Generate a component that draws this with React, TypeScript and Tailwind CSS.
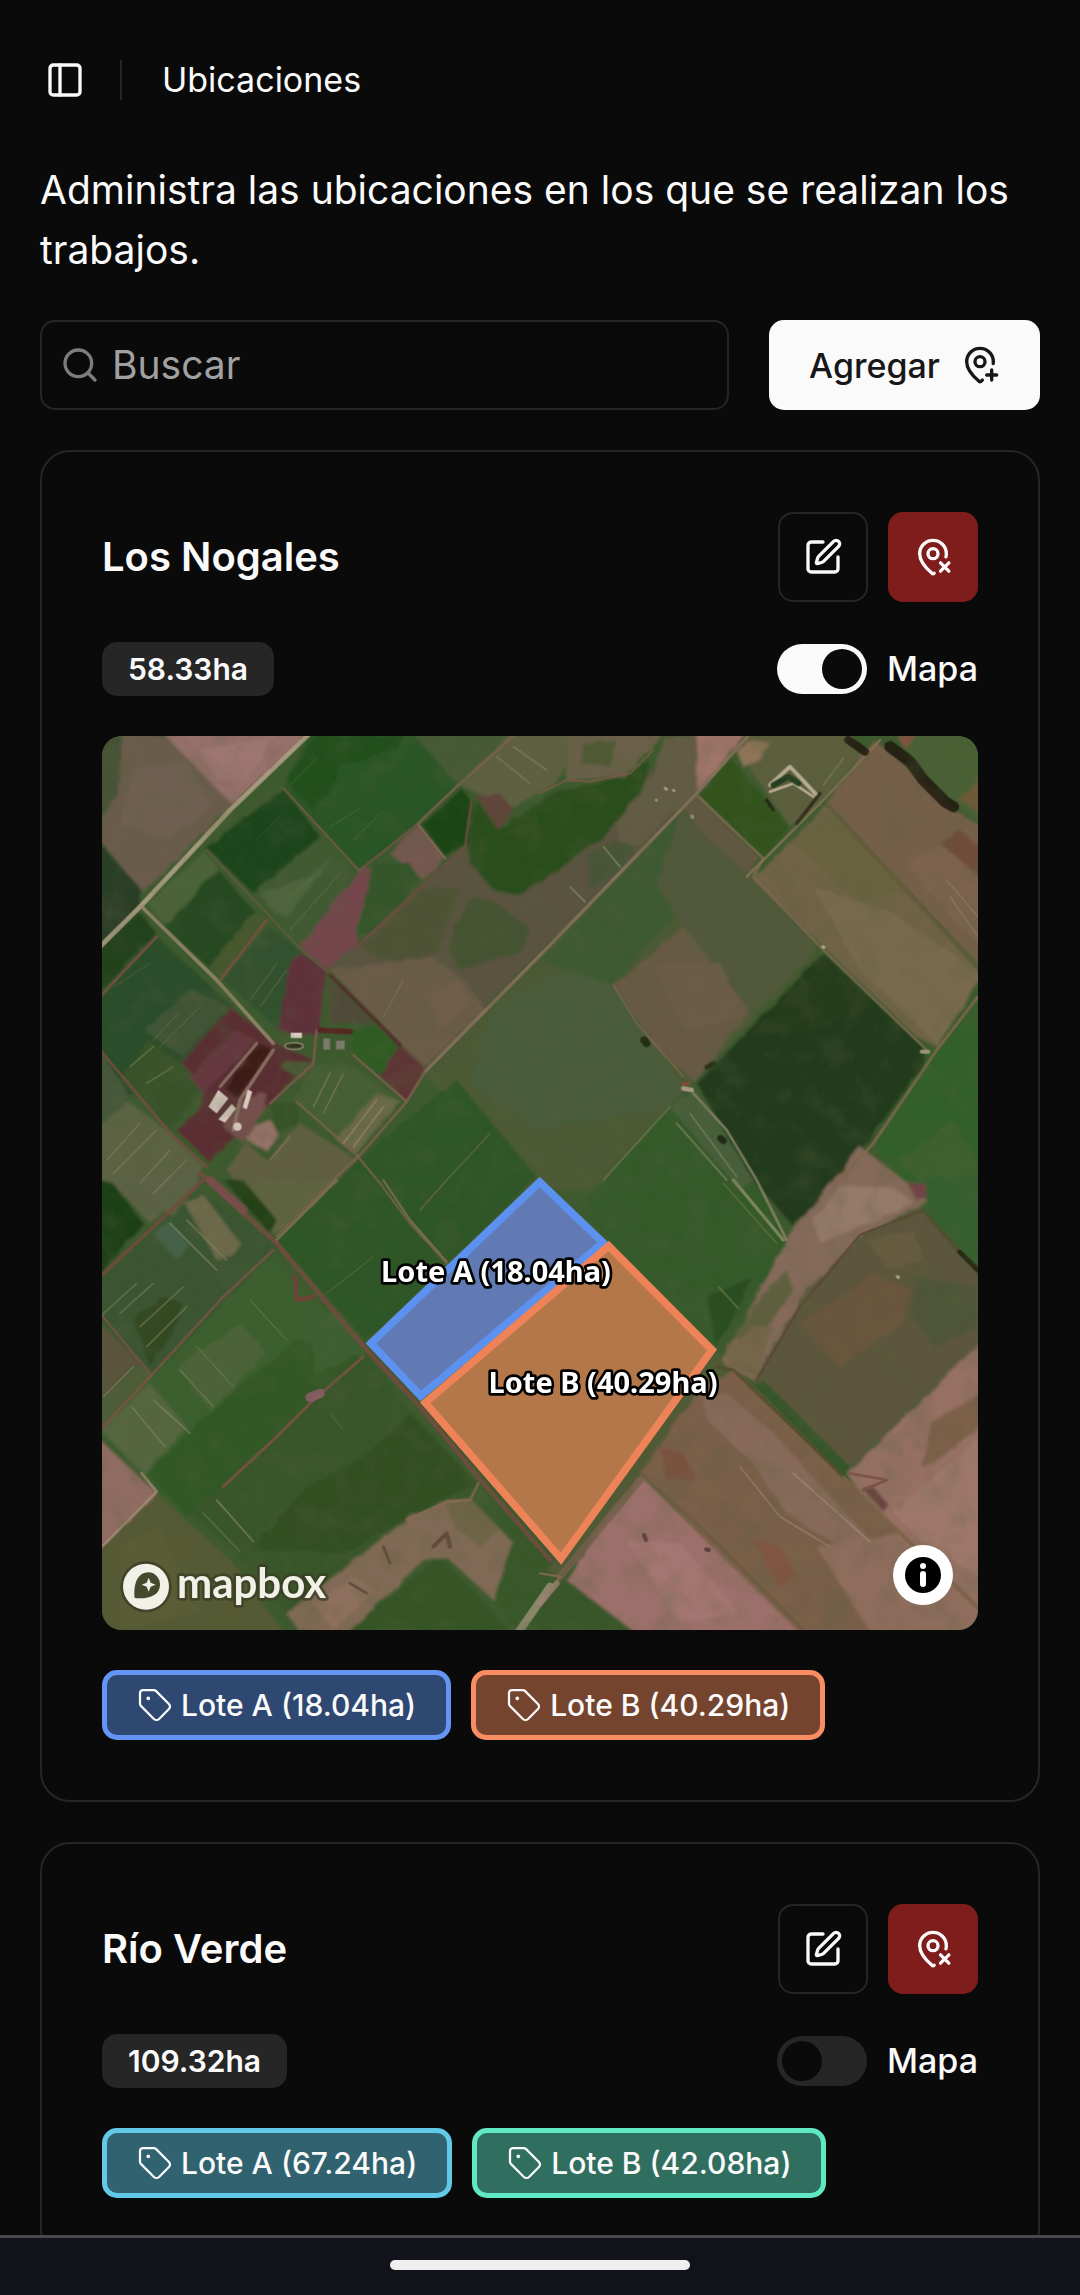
import { useState } from "react";
import { MapPinPlus, MapPinX, PanelLeft, Search, SquarePen, Tag } from "lucide-react";

type Shape = [fill: string, points: string];
type Line = [stroke: string, width: number, points: string];

type Lot = { name: string; area: string; tone: string };
type Place = { name: string; area: string; showMap: boolean; lots: Lot[] };

const places: Place[] = [
  {
    name: "Los Nogales",
    area: "58.33ha",
    showMap: true,
    lots: [
      { name: "Lote A", area: "18.04ha", tone: "border-[#6495f4] bg-[#2e4872]" },
      { name: "Lote B", area: "40.29ha", tone: "border-[#f88d62] bg-[#75442f]" },
    ],
  },
  {
    name: "Río Verde",
    area: "109.32ha",
    showMap: false,
    lots: [
      { name: "Lote A", area: "67.24ha", tone: "border-[#62c9e6] bg-[#306270]" },
      { name: "Lote B", area: "42.08ha", tone: "border-[#60e8c4] bg-[#306f5f]" },
    ],
  },
];

/* Satellite imagery, one list of fields and one of tracks per tile. */
const northWest: Shape[] = [
  ["#4c5a35", "975,1030 1790,190 2150,640 2130,690 1780,1050 1500,1380 1280,1380"],
  ["#495b3a", "1180,830 1540,650 1620,890 1750,1070 1700,1130 1320,1200 1110,1060"],
  ["#6b5c4c", "0,0 200,18 395,222 130,490 0,330"],
  ["#6f6151", "100,120 260,90 330,230 200,330 60,280"],
  ["#455336", "0,18 70,18 60,110 50,200 0,270"],
  ["#96706a", "180,0 640,0 395,222"],
  ["#9d766f", "300,60 520,20 440,150 350,150"],
  ["#2b3c25", "0,340 125,480 110,550 0,650"],
  ["#2b5527", "630,0 930,0 1075,165 950,285 780,420 550,170"],
  ["#21501e", "640,18 920,18 890,60 720,110 690,190 640,240 560,160"],
  ["#1d441b", "550,175 660,320 460,490 320,355"],
  ["#3f5a33", "665,325 770,435 600,650 460,490"],
  ["#4d653c", "480,490 600,450 700,380 560,560 520,545"],
  ["#4b6338", "315,365 350,415 200,585 140,520"],
  ["#274a22", "355,420 465,545 330,715 190,590"],
  ["#46592f", "465,545 505,575 365,750 330,710"],
  ["#30512e", "505,590 600,660 540,900 365,750"],
  ["#24431f", "0,650 120,545 170,610 0,790"],
  ["#2c4e2c", "0,800 170,620 400,830 240,1000 90,1100 0,960"],
  ["#3f5434", "270,780 390,830 250,980 130,900"],
  ["#37522c", "150,930 240,1000 300,1080 215,1200 60,1050"],
  ["#45593a", "0,960 90,1100 0,1180"],
  ["#5c6442", "80,1110 215,1215 310,1310 230,1460 90,1400 0,1400 0,1190"],
  ["#5a2f30", "390,830 530,940 640,990 510,1115 380,1240 330,1300 230,1200 300,1130 310,1080 245,1000"],
  ["#65393f", "410,900 470,930 310,1090 270,1040"],
  ["#3c1b14", "480,940 520,960 410,1105 375,1070"],
  ["#74504c", "420,1110 500,1090 490,1150 430,1240 370,1190"],
  ["#75464d", "790,410 815,420 770,600 770,650 680,720 600,650"],
  ["#5f303a", "600,665 680,720 655,915 590,915 535,900 570,700"],
  ["#4f4a38", "690,745 820,880 690,880"],
  ["#75584f", "870,370 955,285 1035,385 970,450"],
  ["#35542b", "775,610 820,400 930,400 960,450 820,600"],
  ["#5a523f", "690,715 1095,350 1190,490 1320,460 1560,260 1640,130 1790,18 1940,18 1790,190 975,1020"],
  ["#4f5236", "780,650 960,480 1080,470 1010,680 850,690"],
  ["#6a5c46", "690,720 1000,680 1090,750 1160,840 975,1010 900,940"],
  ["#725d4b", "990,800 1070,750 1120,820 1010,900"],
  ["#445232", "1060,590 1120,500 1190,520 1290,600 1270,660 1080,720 1045,660"],
  ["#294e1b", "1130,210 1195,300 1350,190 1520,155 1650,90 1640,160 1550,280 1500,330 1320,460 1250,495 1180,480 1110,400 1105,330"],
  ["#1c4516", "1085,175 1120,220 1100,340 1035,380 965,285"],
  ["#455a35", "930,0 1240,0 1075,165"],
  ["#5f6043", "1240,0 1450,0 1370,160 1230,235 1080,165"],
  ["#60443a", "1130,200 1200,190 1240,240 1195,300"],
  ["#2d5c24", "750,900 830,890 895,950 840,1035 760,970"],
  ["#5f3435", "900,945 975,1015 920,1115 840,1035"],
  ["#455f36", "650,1000 760,1010 905,1115 770,1275 580,1110"],
  ["#6b694a", "830,1090 900,1115 770,1275 710,1230"],
  ["#345226", "510,1120 590,1120 600,1170 530,1210"],
  ["#9a736a", "460,1190 510,1170 540,1220 500,1260 440,1230"],
  ["#615f43", "600,1180 770,1290 530,1520 380,1320 440,1240 500,1290"],
  ["#2d5626", "530,1530 780,1285 1070,1050 1310,1340 800,1835"],
  ["#4b5a36", "560,990 650,1000 620,1060 540,1010"],
];

const northWestLines: Line[] = [
  ["#b5a58b", 14, "640,0 390,240 125,525 0,650"],
  ["#9a8a70", 11, "125,530 350,750 520,940"],
  ["#7a5a48", 6, "550,175 780,425"],
  ["#5f5b40", 8, "320,360 600,655 690,730"],
  ["#7c5046", 8, "500,570 360,750"],
  ["#7c5046", 8, "170,620 0,800"],
  ["#55302a", 12, "690,735 900,945"],
  ["#7d6250", 8, "950,285 1075,165 1240,18"],
  ["#8a6a58", 7, "955,285 1035,385"],
  ["#6f5344", 8, "780,420 950,285"],
  ["#6f4c40", 8, "770,650 1095,350 1115,210"],
  ["#8b7460", 10, "975,1025 1350,645 1790,190 1960,0"],
  ["#7d6250", 8, "975,1025 920,1115 780,1275 700,1350 530,1520"],
  ["#7d4c44", 8, "0,960 220,1220 320,1310"],
  ["#7d6250", 7, "920,1115 760,975"],
  ["#7d6250", 7, "590,1115 770,1275 840,1360 930,1480 1040,1600"],
  ["#7d5a50", 8, "650,900 640,1000 510,1120"],
  ["#8d7767", 9, "470,940 360,1070"],
  ["#8d7767", 11, "520,960 420,1110 400,1200"],
  ["#5a2020", 16, "660,900 750,905"],
  ["#4f6f40", 3, "570,165 650,85"],
  ["#4f6f40", 3, "690,290 780,235"],
  ["#4f6f40", 3, "760,330 840,250"],
  ["#36602d", 3, "470,330 540,260"],
  ["#66744e", 3, "570,600 720,430"],
  ["#66744e", 3, "560,510 640,440"],
  ["#66744e", 3, "450,810 530,700"],
  ["#66744e", 3, "480,830 560,720"],
  ["#66744e", 3, "160,930 235,850"],
  ["#66744e", 3, "180,950 300,830"],
  ["#747a58", 4, "90,1010 160,950"],
  ["#747a58", 4, "140,1060 220,1010"],
  ["#55643f", 3, "40,770 150,700"],
  ["#7f7f5e", 4, "20,1290 120,1180"],
  ["#7f7f5e", 4, "40,1330 170,1200"],
  ["#7f7f5e", 4, "120,1360 210,1260"],
  ["#7f7f5e", 4, "160,1390 260,1290"],
  ["#7f7f5e", 4, "640,1130 690,1030"],
  ["#7f7f5e", 4, "670,1150 730,1030"],
  ["#908665", 5, "730,1240 830,1110"],
  ["#908665", 5, "760,1250 850,1130"],
  ["#857a59", 4, "510,1290 570,1220"],
  ["#7d7354", 4, "850,860 910,750"],
  ["#6d7048", 4, "1040,1350 1170,1210"],
  ["#78866a", 4, "1190,80 1290,160"],
  ["#78866a", 4, "1240,50 1340,120"],
];

const northEast: Shape[] = [
  ["#6a6148", "90,0 370,0 330,60 250,140 80,150"],
  ["#4f5a36", "130,40 230,30 210,110 120,100"],
  ["#a1756a", "470,0 620,0 560,90 470,180"],
  ["#645c44", "370,18 470,18 470,190 240,400 230,280 340,130"],
  ["#4a5538", "140,380 220,330 290,350 230,430 150,480"],
  ["#5c5e3e", "590,60 640,0 930,0 960,80 850,210 750,290"],
  ["#8f7459", "590,60 640,30 690,40 660,90 610,110"],
  ["#30521f", "475,190 575,90 750,290 670,385"],
  ["#60593f", "430,230 470,195 660,385 620,430 540,390"],
  ["#3e5a31", "130,560 420,240 400,400 400,560 220,765 0,690"],
  ["#51593a", "420,250 620,430 820,640 800,700 630,840 430,590 350,460"],
  ["#675a45", "430,590 630,840 465,1055 350,960 220,765"],
  ["#6c5b46", "340,700 540,700 620,860 430,900"],
  ["#765f49", "1000,30 1150,150 1240,240 1330,290 1330,720 860,220"],
  ["#7d634e", "1100,400 1220,330 1330,450 1330,660 1160,480"],
  ["#6f4e3b", "1200,340 1260,300 1330,360 1330,450"],
  ["#486034", "1060,0 1330,0 1330,290 1160,150"],
  ["#805241", "1070,18 1130,18 1100,60"],
  ["#6c5a38", "1314,140 1330,260 1260,210"],
  ["#6f6447", "860,225 1330,735 1190,950 1130,920 640,450"],
  ["#796a4e", "820,470 1040,540 1330,735 1190,940 960,720"],
  ["#6b6440", "760,340 870,240 1100,480 960,520"],
  ["#243a1b", "850,670 1150,950 1155,1000 900,1350 760,1490 640,1350 470,1060"],
  ["#263e1a", "850,680 1010,820 830,900 640,910"],
  ["#335f2c", "1190,960 1330,800 1330,1620 1000,1250 1155,1000"],
  ["#3d602f", "1080,1290 1240,1170 1330,1330 1330,1500 1200,1420"],
  ["#355a2a", "190,1350 390,1130 470,1080 640,1350 745,1540 530,1850 205,1530 110,1420"],
  ["#465f3b", "390,1130 470,1080 640,1350 600,1380"],
  ["#2c4e22", "500,1700 640,1640 560,1800 530,1850"],
];

const northEastLines: Line[] = [
  ["#7b6a50", 8, "470,195 670,385 640,440 850,660 1160,960"],
  ["#867356", 8, "1020,30 850,210 620,440"],
  ["#665b3d", 8, "860,220 1020,400 1330,730"],
  ["#80694f", 9, "1314,800 1190,960 1000,1240 880,1370"],
  ["#7b6a50", 5, "220,765 290,880 430,1040"],
  ["#6c7850", 5, "390,1130 190,1350"],
  ["#8a8468", 8, "460,1090 560,1200 650,1350 740,1530"],
  ["#77805b", 6, "410,1180 560,1350"],
  ["#77805b", 5, "450,1150 590,1340"],
  ["#c7baa2", 12, "690,165 750,110 830,195"],
  ["#c7baa2", 8, "690,185 760,160 820,200"],
  ["#17371a", 17, "700,165 745,140 775,160"],
  ["#1d180f", 34, "1050,50 1110,95 1150,150 1215,215 1240,230"],
  ["#1d180f", 24, "925,30 975,65"],
  ["#282015", 10, "680,210 700,240"],
  ["#2b2718", 10, "840,190 770,280"],
  ["#927e67", 4, "1220,450 1314,560"],
  ["#927e67", 4, "1230,500 1314,620"],
  ["#879373", 4, "190,350 240,410"],
  ["#879373", 4, "90,470 135,515"],
  ["#7a7d52", 5, "910,85 850,165"],
  ["#7f5a48", 6, "0,190 80,150 150,155 270,130 340,60"],
  ["#1c2512", 22, "312,930 320,940"],
  ["#2a2a18", 14, "500,1012 522,1000"],
  ["#182512", 20, "542,1225 550,1232"],
  ["#c0a79a", 14, "430,1075 455,1080"],
  ["#a33f3c", 8, "428,1062 445,1060"],
  ["#b3a48a", 12, "1145,965 1165,965"],
  ["#b9b79d", 9, "848,650 852,652"],
  ["#b9ad9a", 8, "375,175 380,178"],
  ["#b9ad9a", 8, "400,180 402,182"],
  ["#b9ad9a", 8, "348,210 350,211"],
  ["#94a27f", 10, "455,258 458,262"],
];

const southWest: Shape[] = [
  ["#1f3f18", "0,0 40,10 130,130 0,280"],
  ["#5c6244", "30,0 300,-40 290,20 150,130"],
  ["#3b5530", "300,30 530,190 510,220 160,580 0,410 0,300"],
  ["#456248", "160,160 210,120 270,200 230,240"],
  ["#6d6a4b", "255,70 310,45 420,190 400,230 350,240"],
  ["#304a23", "100,420 180,350 250,370 220,460 150,560"],
  ["#5a523e", "0,430 120,545 0,660"],
  ["#4e5d38", "0,660 120,550 160,590 0,750"],
  ["#5e6441", "430,0 720,0 530,170"],
  ["#213f18", "370,0 430,0 530,120 510,160"],
  ["#3b5f2d", "510,230 800,510 370,920 250,1010 130,880 0,760 160,590"],
  ["#556640", "0,750 150,610 260,740 200,810 130,880"],
  ["#4b6439", "230,560 420,430 500,520 330,690"],
  ["#305826", "600,480 400,630 140,880 260,1010 560,740 790,530"],
  ["#375729", "800,520 930,690 1130,910 1110,950 940,1010 560,1300 400,1110 270,1000"],
  ["#304f24", "790,830 930,700 1130,910 940,1000 740,1120 450,1110 620,920"],
  ["#3d5f31", "620,380 720,400 790,500 650,590"],
  ["#8f6c62", "0,780 170,940 0,1110"],
  ["#545a35", "170,940 400,1150 560,1370 0,1370 0,1110"],
  ["#5a5b36", "60,1100 180,1040 300,1300 60,1350"],
  ["#395829", "1140,910 1400,1180 1400,1370 1240,1340 1180,1260 1240,1090"],
  ["#345426", "720,1370 1020,1130 1250,1370"],
  ["#806a55", "560,1300 930,1010 1040,965 1110,955 1240,1090 1180,1260 1040,1130 970,1140 730,1370 610,1370"],
  ["#6e6547", "1040,970 1110,955 1200,1050 1140,1100 1060,1040"],
  ["#8d6f5d", "640,1270 760,1190 830,1230 700,1350"],
];

const southWestLines: Line[] = [
  ["#774b41", 14, "300,-20 530,190 800,510 960,680 1150,910 1350,1140"],
  ["#7d4e4d", 26, "330,0 430,90"],
  ["#754a3d", 10, "310,0 0,290"],
  ["#7d5543", 8, "520,210 370,350 150,590 0,750"],
  ["#7a5245", 7, "0,400 150,580"],
  ["#7d5443", 9, "790,530 640,660 530,770 370,920"],
  ["#915e6c", 28, "630,652 660,640"],
  ["#78403a", 14, "585,290 590,360 640,350"],
  ["#8a755c", 6, "850,0 930,120 1040,245"],
  ["#8a7559", 6, "530,180 710,0"],
  ["#6e6a48", 4, "1040,0 960,90"],
  ["#52663a", 4, "820,230 680,340"],
  ["#7c7f5a", 5, "210,130 350,270"],
  ["#7c7f5a", 5, "260,120 380,240"],
  ["#747a55", 4, "0,410 110,310"],
  ["#747a55", 4, "60,400 160,310"],
  ["#747a55", 4, "140,500 260,380"],
  ["#747a55", 4, "120,440 250,320"],
  ["#7c7f5a", 4, "10,650 100,560"],
  ["#7e8860", 4, "95,680 195,800"],
  ["#7e8860", 4, "160,660 270,760"],
  ["#758059", 4, "240,570 340,680"],
  ["#6d7a50", 4, "290,500 400,620"],
  ["#5d7548", 4, "450,360 560,480"],
  ["#8d8a65", 4, "350,960 460,1085"],
  ["#657650", 4, "310,1000 420,1115"],
  ["#5e7146", 3, "690,700 730,750"],
  ["#876b58", 8, "1135,910 1110,960 1040,965 920,1020"],
  ["#a28a77", 8, "125,880 170,935 0,1105"],
  ["#62433a", 12, "1000,1100 1040,1060 1050,1100"],
  ["#62433a", 8, "850,1100 870,1150"],
  ["#62433a", 8, "750,1210 800,1240"],
  ["#9b9078", 24, "1260,1350 1350,1220"],
];

const southEast: Shape[] = [
  ["#345f2d", "1160,-10 1330,-10 1330,290 1140,80"],
  ["#856b5a", "880,0 960,-100 1090,0 1160,60 1140,80 970,160 800,340 640,600 540,550 760,150"],
  ["#957a68", "900,20 1060,20 1120,70 960,140 840,190 820,120"],
  ["#60603f", "680,330 740,270 760,330 640,500 580,470"],
  ["#756549", "560,500 640,440 700,440 650,590 560,560"],
  ["#5c563c", "1140,85 1330,300 1330,480 920,870 640,600 800,330 970,165"],
  ["#69563e", "780,430 1000,280 1110,330 1090,430 900,560"],
  ["#4f5737", "1130,290 1314,320 1314,440 1180,500 1110,400"],
  ["#665b41", "980,180 1120,150 1150,240 1040,270"],
  ["#956f63", "1330,480 1330,1370 1250,1370 920,880"],
  ["#7c6049", "1330,640 1330,730 1180,850 1140,860 1180,720"],
  ["#9d786a", "1060,1000 1330,760 1330,1200 1140,1080"],
  ["#4f5a36", "530,510 560,560 320,860 60,1190 20,1170"],
  ["#7a5f48", "480,620 580,565 910,890 1330,1290 1330,1370 780,1370 305,880"],
  ["#886a5a", "490,660 560,640 700,760 1000,1090 880,1090 740,1000 640,850 500,720"],
  ["#7a5341", "360,800 430,820 470,900 380,900"],
  ["#805542", "640,1080 720,1100 770,1190 720,1220"],
  ["#8f6d5d", "830,1100 1080,1060 1314,1290 1314,1370 1000,1370"],
  ["#9b706a", "305,890 790,1370 300,1370 80,1200 200,1010"],
  ["#a47671", "260,1080 420,1090 600,1300 420,1330"],
  ["#38572b", "0,1240 80,1200 210,1300 300,1370 0,1370"],
  ["#35552a", "640,610 670,600 930,860 905,890"],
  ["#734347", "1100,5 1160,15 1160,50 1130,60"],
  ["#6a4540", "970,930 1000,920 1045,975 1030,995"],
];

const southEastLines: Line[] = [
  ["#765f4c", 22, "300,900 60,1190"],
  ["#6c5c41", 8, "300,880 480,1040 790,1350"],
  ["#554b2c", 8, "530,560 580,570 910,890"],
  ["#7c6549", 8, "910,890 1080,1060 1330,1300"],
  ["#5b4630", 7, "1330,300 1150,90 960,165 780,380 650,600"],
  ["#21200f", 14, "1258,215 1314,270"],
  ["#68773f", 4, "550,10 710,190"],
  ["#8a8d65", 10, "580,0 730,180"],
  ["#8c6c55", 7, "0,1180 60,1190 0,1280"],
  ["#9b8475", 18, "0,1270 50,1210"],
  ["#957d6c", 5, "600,860 720,1010 870,1100"],
  ["#a08777", 5, "760,880 990,1085"],
  ["#5a3535", 12, "312,1065 318,1080"],
  ["#5a3535", 12, "498,1108 506,1110"],
  ["#7d5045", 8, "930,880 1040,900 970,930"],
  ["#65753f", 5, "535,320 595,385"],
  ["#c5bb9b", 10, "1072,290 1075,292"],
];

const tiles = [
  { id: "nw", move: "translate(0 0)", fields: northWest, tracks: northWestLines },
  { id: "ne", move: "translate(1320 0)", fields: northEast, tracks: northEastLines },
  { id: "sw", move: "translate(0 1350)", fields: southWest, tracks: southWestLines },
  { id: "se", move: "translate(1320 1350)", fields: southEast, tracks: southEastLines },
];

function SatelliteMap() {
  return (
    <div className="relative aspect-[876/894] w-full overflow-hidden rounded-[20px] bg-[#3c5a2e]">
      <svg
        className="block size-full"
        viewBox="6 18 2628 2682"
        preserveAspectRatio="xMidYMid slice"
        role="img"
        aria-label="Mapa satelital de Los Nogales"
      >
        <defs>
          <filter id="soft-fields" x="0" y="0" width="100%" height="100%">
            <feTurbulence type="fractalNoise" baseFrequency="0.02" numOctaves="4" seed="7" result="grain" />
            <feDisplacementMap in="SourceGraphic" in2="grain" scale="14" result="rough" />
            <feGaussianBlur in="rough" stdDeviation="5" />
          </filter>
          <filter id="soft-tracks" x="0" y="0" width="100%" height="100%">
            <feGaussianBlur stdDeviation="2" />
          </filter>
          <filter id="mottle" x="0" y="0" width="100%" height="100%">
            <feTurbulence type="fractalNoise" baseFrequency="0.012" numOctaves="5" seed="3" />
            <feColorMatrix values="0 0 0 0 0.1  0 0 0 0 0.12  0 0 0 0 0.05  1.6 0 0 0 -0.72" />
          </filter>
        </defs>
        <g filter="url(#soft-fields)">
          <rect x="-60" y="-60" width="2760" height="2830" fill="#3c5a2e" />
          {tiles.map((tile) => (
            <g key={tile.id} transform={tile.move}>
              {tile.fields.map(([fill, points], i) => (
                <polygon key={i} points={points} fill={fill} />
              ))}
            </g>
          ))}
        </g>
        <g filter="url(#soft-tracks)">
          {tiles.map((tile) => (
            <g
              key={tile.id}
              transform={tile.move}
              fill="none"
              strokeLinecap="round"
              strokeLinejoin="round"
              strokeOpacity="0.85"
            >
              {tile.tracks.map(([stroke, width, points], i) => (
                <polyline key={i} points={points} stroke={stroke} strokeWidth={width} />
              ))}
            </g>
          ))}
          <g fill="#d8cabf">
            <polygon points="325,1130 355,1080 385,1105 350,1150" />
            <polygon points="355,1168 395,1122 408,1135 375,1178" />
            <polygon points="428,1132 443,1078 457,1085 440,1138" />
            <polygon points="572,908 606,908 606,924 572,924" />
            <circle cx="412" cy="1190" r="13" />
          </g>
          <g fill="#7d7b6e">
            <rect x="670" y="925" width="20" height="34" />
            <rect x="708" y="932" width="26" height="26" />
          </g>
          <ellipse cx="582" cy="948" rx="28" ry="10" fill="#35301f" stroke="#8f8a70" strokeWidth="5" />
        </g>
        <rect x="0" y="0" width="2640" height="2710" filter="url(#mottle)" opacity="0.4" />

        <g strokeWidth="23" strokeLinejoin="miter">
          <polygon points="813,1840 1319,1356 1509,1538 962,1998" fill="#617ab3" stroke="#5c91f0" />
          <polygon points="976,2018 1526,1548 1836,1860 1383,2486" fill="#b3774a" stroke="#ee8357" />
        </g>
        <g
          fill="#fff"
          stroke="#000"
          strokeWidth="16"
          strokeLinejoin="round"
          textAnchor="middle"
          paintOrder="stroke"
          fontSize="87"
          className="font-['Noto_Sans',sans-serif] font-bold"
        >
          <text x="1188" y="1655">Lote A (18.04ha)</text>
          <text x="1509" y="1988">Lote B (40.29ha)</text>
        </g>

        <g transform="translate(0 1350)">
          <circle cx="138" cy="1220" r="77" fill="#3b3e26" opacity="0.8" />
          <circle cx="138" cy="1220" r="69" fill="#f1f1e8" />
          <path d="M104 1254 C100 1212 112 1177 146 1177 A36 36 0 0 1 180 1214 C180 1246 146 1258 104 1254 Z" fill="#454a2d" />
          <path d="M146 1193 L152 1208 L167 1214 L152 1220 L146 1235 L140 1220 L125 1214 L140 1208 Z" fill="#f1f1e8" />
          <text
            x="231"
            y="1254"
            fontSize="126"
            fill="#f1f1e8"
            stroke="#3b3e26"
            strokeOpacity="0.75"
            strokeWidth="16"
            strokeLinejoin="round"
            paintOrder="stroke"
            className="font-['Lato',sans-serif] font-bold"
          >
            mapbox
          </text>
        </g>
      </svg>
      <button
        type="button"
        aria-label="Información del mapa"
        className="absolute right-[25px] bottom-[25px] flex size-[60px] items-center justify-center rounded-full bg-white"
      >
        <svg viewBox="0 0 36 36" className="size-9" aria-hidden="true">
          <circle cx="18" cy="18" r="18" />
          <circle cx="18" cy="9" r="3" fill="#fff" />
          <path d="M18 17v10" stroke="#fff" strokeWidth="6" strokeLinecap="round" />
        </svg>
      </button>
    </div>
  );
}

function PlaceCard({ place }: { place: Place }) {
  const [mapOn, setMapOn] = useState(place.showMap);
  const switchId = `mapa-${place.name.replace(/\s/g, "-")}`;

  return (
    <section className="flex flex-col gap-10 rounded-[30px] border-2 border-[#262626] p-[60px]">
      <div className="flex items-center justify-between">
        <h2 className="text-[40px] leading-[60px] font-semibold">{place.name}</h2>
        <div className="flex gap-5">
          <button
            type="button"
            aria-label={`Editar ${place.name}`}
            className="flex size-[90px] items-center justify-center rounded-[15px] border-2 border-[#262626]"
          >
            <SquarePen className="size-10" />
          </button>
          <button
            type="button"
            aria-label={`Eliminar ${place.name}`}
            className="flex size-[90px] items-center justify-center rounded-[15px] bg-[#7f1d1d]"
          >
            <MapPinX className="size-10" />
          </button>
        </div>
      </div>

      <div className="flex items-center justify-between">
        <span className="flex h-[54px] items-center rounded-[15px] bg-[#262626] px-[26px] text-[30px] font-semibold">
          {place.area}
        </span>
        <div className="flex items-center gap-5">
          <input
            id={switchId}
            type="checkbox"
            role="switch"
            checked={mapOn}
            onChange={(event) => setMapOn(event.target.checked)}
            className="flex h-[50px] w-[90px] appearance-none items-center rounded-full bg-[#262626] px-[5px] before:size-10 before:rounded-full before:bg-[#0a0a0a] before:content-[''] checked:justify-end checked:bg-[#fafafa]"
          />
          <label htmlFor={switchId} className="text-[34px] leading-[50px] font-medium">
            Mapa
          </label>
        </div>
      </div>

      {mapOn && <SatelliteMap />}

      <ul className="flex flex-wrap gap-5">
        {place.lots.map((lot) => (
          <li
            key={lot.name}
            className={`flex h-[70px] items-center gap-2 rounded-[15px] border-[5px] px-[30px] text-[30px] font-medium ${lot.tone}`}
          >
            <Tag className="size-9" strokeWidth={1.5} />
            {lot.name} ({lot.area})
          </li>
        ))}
      </ul>
    </section>
  );
}

export default function App() {
  return (
    <div className="flex h-screen flex-col bg-[#0a0a0a] font-['Inter',sans-serif] text-[#fafafa]">
      <div className="min-h-0 flex-1 overflow-hidden">
        <header className="flex h-40 items-center px-10">
          <button type="button" aria-label="Alternar barra lateral" className="flex w-[50px] justify-center">
            <PanelLeft className="size-10" />
          </button>
          <div className="mr-10 ml-[30px] h-10 w-0.5 bg-[#262626]" />
          <h1 className="text-[34px] leading-[50px]">Ubicaciones</h1>
        </header>

        <main className="flex flex-col gap-10 px-10">
          <p className="text-[39px] leading-[60px]">
            Administra las ubicaciones en los que se realizan los trabajos.
          </p>

          <div className="flex gap-10">
            <label className="flex h-[90px] min-w-0 flex-1 items-center gap-3 rounded-[15px] border-2 border-[#262626] px-[18px]">
              <Search className="size-10 shrink-0 text-[#7c7c7c]" />
              <input
                type="search"
                aria-label="Buscar"
                placeholder="Buscar"
                className="w-full min-w-0 bg-transparent text-[39px] outline-none placeholder:text-[#a1a1a1]"
              />
            </label>
            <button
              type="button"
              className="flex h-[90px] items-center gap-5 rounded-[15px] bg-[#fafafa] px-10 text-[34px] font-medium text-[#171717]"
            >
              Agregar
              <MapPinPlus className="size-10" />
            </button>
          </div>

          {places.map((place) => (
            <PlaceCard key={place.name} place={place} />
          ))}
        </main>
      </div>

      <footer className="flex h-[60px] shrink-0 items-center justify-center border-t-[3px] border-[#48484e] bg-[#12121a] pb-1">
        <div className="h-2.5 w-[300px] rounded-full bg-[#efefef]" />
      </footer>
    </div>
  );
}
